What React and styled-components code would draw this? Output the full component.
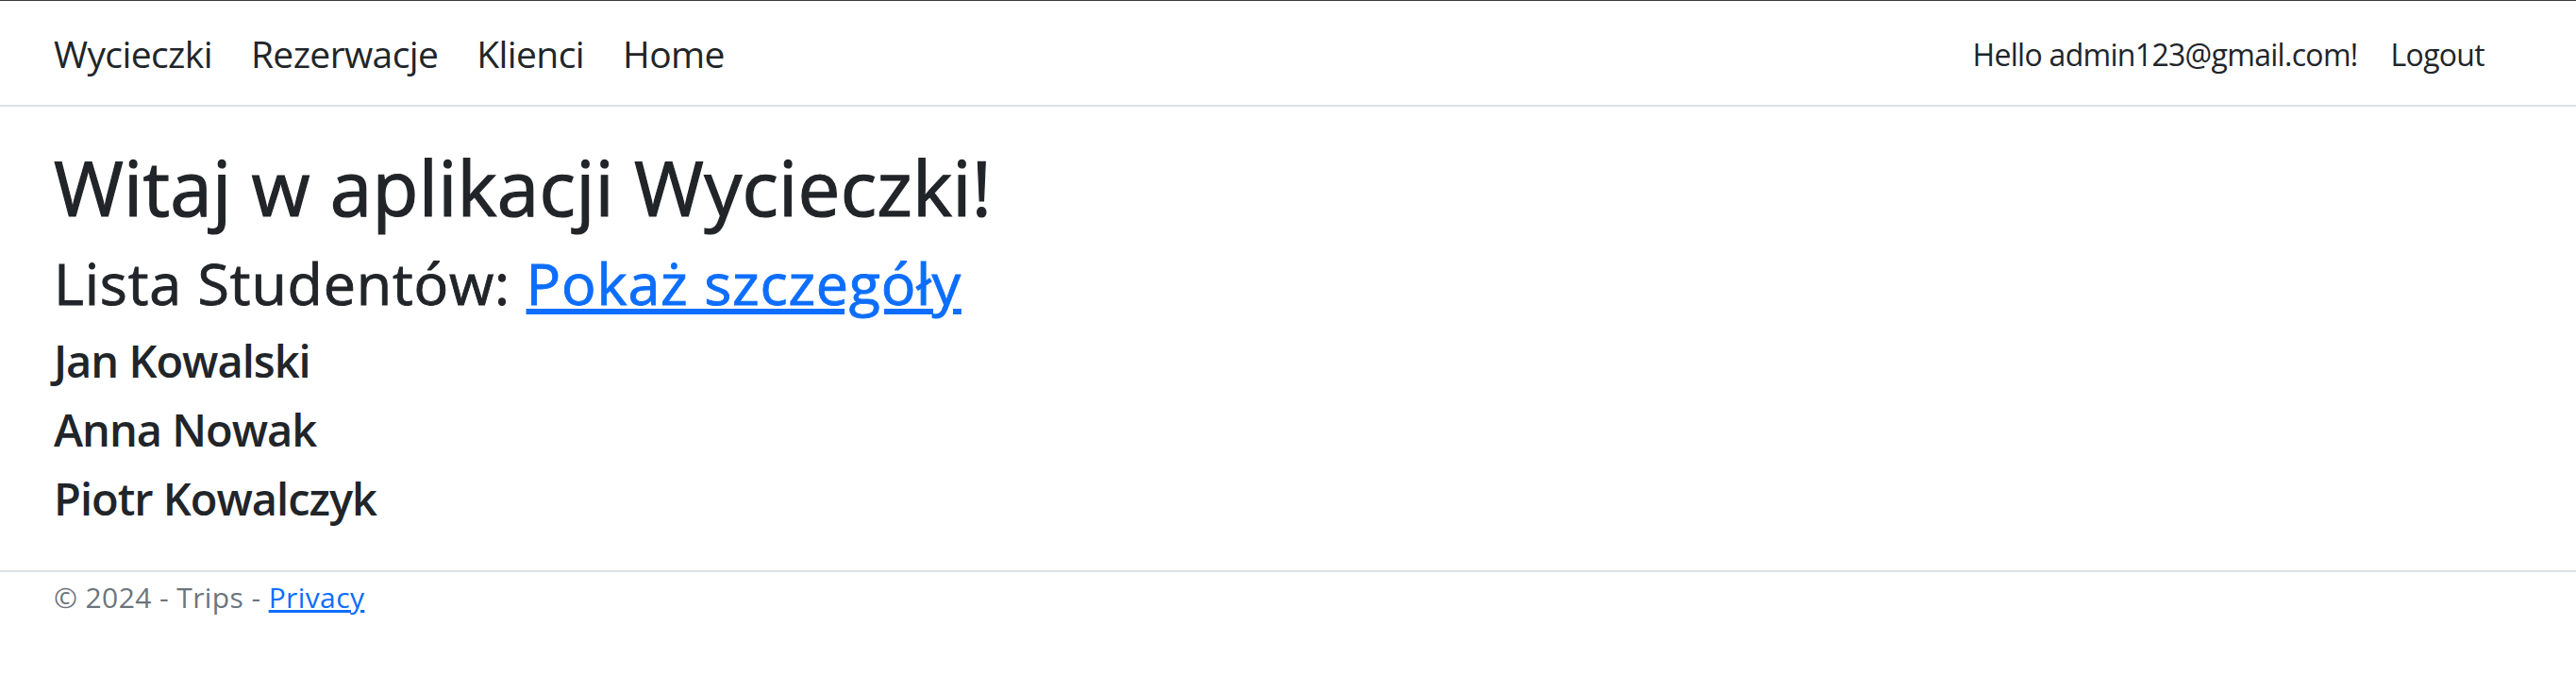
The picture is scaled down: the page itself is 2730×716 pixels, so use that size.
import React from "react";
import styled, { createGlobalStyle } from "styled-components";

const GlobalStyle = createGlobalStyle`
  html, body {
    margin: 0;
    padding: 0;
    background: #fff;
  }
  body {
    border-top: 1px solid #3c3c3c;
    font-family: "Open Sans", "Noto Sans", sans-serif;
    color: #212529;
  }
  * {
    box-sizing: border-box;
  }
`;

const students = ["Jan Kowalski", "Anna Nowak", "Piotr Kowalczyk"];

export default function App() {
  return (
    <>
      <GlobalStyle />
      <Navbar>
        <NavLinks>
          <NavLink href="#">Wycieczki</NavLink>
          <NavLink href="#">Rezerwacje</NavLink>
          <NavLink href="#">Klienci</NavLink>
          <NavLink href="#">Home</NavLink>
        </NavLinks>
        <UserBox>
          <UserText>Hello admin123@gmail.com!</UserText>
          <UserText as="a" href="#">
            Logout
          </UserText>
        </UserBox>
      </Navbar>
      <Main>
        <Title>Witaj w aplikacji Wycieczki!</Title>
        <Subtitle>
          Lista Studentów: <Link href="#">Pokaż szczegóły</Link>
        </Subtitle>
        <StudentList>
          {students.map((name) => (
            <Student key={name}>{name}</Student>
          ))}
        </StudentList>
      </Main>
      <Footer>
        © 2024 - Trips - <Link href="#">Privacy</Link>
      </Footer>
    </>
  );
}

const Navbar = styled.nav`
  display: flex;
  align-items: center;
  justify-content: space-between;
  height: 112px;
  padding: 3px 97px 0 57px;
  border-bottom: 2px solid #dee2e6;
`;

const NavLinks = styled.div`
  display: flex;
  align-items: center;
  gap: 41px;
`;

const NavLink = styled.a`
  font-size: 39px;
  line-height: 1.5;
  color: #212529;
  text-decoration: none;
  letter-spacing: -0.6px;
`;

const UserBox = styled.div`
  display: flex;
  align-items: center;
  gap: 35px;
`;

const UserText = styled.span`
  font-size: 32px;
  line-height: 1.5;
  color: #212529;
  text-decoration: none;
  letter-spacing: -0.7px;
`;

const Main = styled.main`
  padding: 37px 57px 0;
  min-height: 491px;
`;

const Title = styled.h1`
  margin: 0 0 18px;
  font-size: 80px;
  line-height: 96px;
  font-weight: 400;
  letter-spacing: 0.25px;
  -webkit-text-stroke: 1.2px currentColor;
`;

const Subtitle = styled.h2`
  margin: 0 0 17px;
  font-size: 61px;
  line-height: 72px;
  font-weight: 400;
  letter-spacing: 0.8px;
  -webkit-text-stroke: 0.9px currentColor;
`;

const Link = styled.a`
  color: #0d6efd;
  text-decoration: underline;
`;

const StudentList = styled.div`
  display: flex;
  flex-direction: column;
  gap: 15px;
`;

const Student = styled.h4`
  margin: 0;
  font-size: 47px;
  line-height: 58px;
  font-weight: 600;
  letter-spacing: -1px;
`;

const Footer = styled.footer`
  border-top: 2px solid #dee2e6;
  padding: 4px 57px 0;
  font-size: 30px;
  line-height: 1.5;
  color: #6c757d;
  letter-spacing: 0.4px;
`;
